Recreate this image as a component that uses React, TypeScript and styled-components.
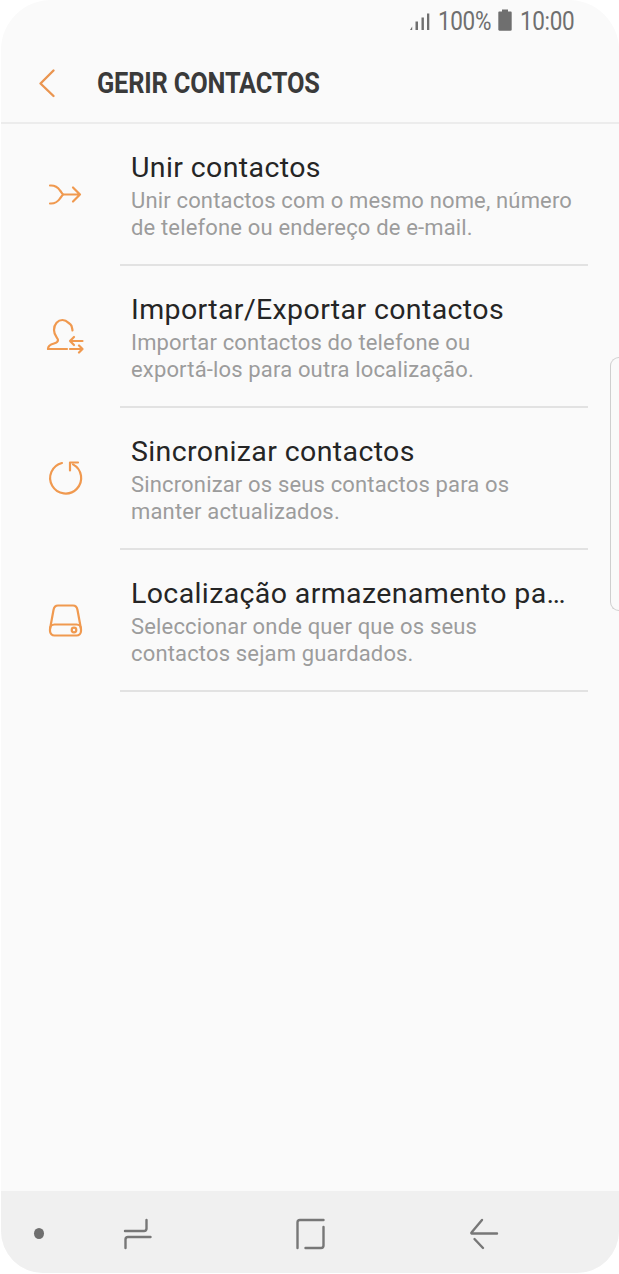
import { ReactElement, ReactNode } from "react";
import styled, { createGlobalStyle } from "styled-components";

const GlobalStyle = createGlobalStyle`
  html, body {
    background-color: #ffffff;
    margin: 0;
    padding: 0;
  }
`;

const Screen = styled.div`
  background-color: #fafafa;
  border-radius: 50px 50px 42px 42px;
  box-sizing: border-box;
  display: flex;
  flex-direction: column;
  font-family: Roboto, "Liberation Sans", sans-serif;
  height: 1273px;
  margin-left: 1px;
  overflow: hidden;
  position: relative;
  width: 618px;
`;

const StatusBar = styled.div`
  align-items: center;
  color: #6f6f6f;
  display: flex;
  flex-shrink: 0;
  font-size: 26px;
  gap: 7px;
  height: 43px;
  justify-content: flex-end;
  padding-right: 44px;

  svg {
    fill: #6f6f6f;
    flex-shrink: 0;
    margin-top: -3px;
  }
`;

const StatusText = styled.span<{ $width: number }>`
  display: inline-block;
  letter-spacing: -0.4px;
  line-height: 1;
  margin-top: -2px;
  transform: scaleX(0.865);
  transform-origin: left center;
  white-space: nowrap;
  width: ${props => props.$width}px;
`;

const Header = styled.div`
  align-items: center;
  border-bottom: 2px solid #ececec;
  display: flex;
  flex-shrink: 0;
  height: 79px;
  padding-left: 37px;
`;

const BackButton = styled.svg`
  flex-shrink: 0;
  height: 30px;
  margin-right: 40px;
  width: 19px;
`;

const Title = styled.h1`
  color: #3a3a3a;
  font-size: 29px;
  font-weight: 700;
  letter-spacing: -0.2px;
  line-height: 1;
  margin: 2px 0 0;
  transform: scaleX(0.875);
  transform-origin: left center;
  white-space: nowrap;
`;

const List = styled.div`
  display: flex;
  flex-direction: column;
  flex-grow: 1;
`;

const Row = styled.div`
  display: flex;
  height: 142px;
`;

const IconCell = styled.div`
  align-items: center;
  display: flex;
  flex-shrink: 0;
  justify-content: center;
  padding-top: 1px;
  width: 126px;

  svg {
    fill: none;
    height: 40px;
    stroke: #f0994f;
    stroke-linecap: round;
    stroke-linejoin: round;
    stroke-width: 2.2;
    width: 40px;
  }
`;

const RowBody = styled.div`
  border-bottom: 2px solid #e2e2e2;
  box-sizing: border-box;
  display: flex;
  flex-direction: column;
  margin-left: -7px;
  padding: 27px 16px 0 11px;
  width: 468px;
`;

const RowTitle = styled.div`
  color: #252525;
  font-size: 28.5px;
  letter-spacing: 0.38px;
  line-height: 34px;
  overflow: hidden;
  text-overflow: ellipsis;
  white-space: nowrap;
`;

const RowText = styled.div`
  color: #9c9c9c;
  font-size: 22px;
  letter-spacing: 0.16px;
  line-height: 26.5px;
  margin-top: 3px;
  white-space: nowrap;
`;

const SideHandle = styled.div`
  border: 1.5px solid #cfcfcf;
  border-radius: 10px 0 0 10px;
  border-right: none;
  box-sizing: border-box;
  height: 254px;
  position: absolute;
  right: 0;
  top: 357px;
  width: 9px;
`;

const NavBar = styled.div`
  align-items: center;
  background-color: #f0f0f0;
  display: flex;
  flex-shrink: 0;
  height: 82px;
  position: relative;
`;

const NavDot = styled.div`
  background-color: #6f6f6f;
  border-radius: 50%;
  height: 11px;
  margin-left: 33px;
  margin-top: 3px;
  width: 10px;
`;

const NavIcons = styled.div`
  display: flex;
  justify-content: space-between;
  margin-left: 78px;
  margin-top: 3px;
  width: 378px;

  svg {
    fill: none;
    height: 32px;
    stroke: #777777;
    stroke-linecap: round;
    stroke-linejoin: round;
    stroke-width: 2.4;
    width: 32px;
  }
`;

interface ContactAction {
  title: string;
  text: ReactNode;
  icon: ReactElement;
}

const actions: ContactAction[] = [
  {
    title: "Unir contactos",
    text: (
      <>
        Unir contactos com o mesmo nome, número
        <br />
        de telefone ou endereço de e-mail.
      </>
    ),
    icon: (
      <svg viewBox="0 0 40 40">
        <path d="M6 9.500h1c4 0 7 2 9 5 1.500 2 2 3 3 4-1 1-1.500 2-3 4-2 3-5 5-9 5H6" />
        <path d="M19 18.500h17M29 11.500l7 7-7 7" />
      </svg>
    ),
  },
  {
    title: "Importar/Exportar contactos",
    text: (
      <>
        Importar contactos do telefone ou
        <br />
        exportá-los para outra localização.
      </>
    ),
    icon: (
      <svg viewBox="0 0 40 40">
        <path d="M4 31c0-3 2-4.500 6-5.500 3-.8 4-2 4-3.500 0-2-4-4-4-10 0-6 4-10 8.500-10 4 0 5.500 2.500 8 4.500 1.500 1 1.500 3 2 6" />
        <path d="M4 31h19" />
        <path d="M26 23h12.500M26 23l4-4M26 23l4 4" />
        <path d="M26 31h12.500M38.500 31l-3.500-3.500M38.500 31l-3.500 3.500" />
      </svg>
    ),
  },
  {
    title: "Sincronizar contactos",
    text: (
      <>
        Sincronizar os seus contactos para os
        <br />
        manter actualizados.
      </>
    ),
    icon: (
      <svg viewBox="0 0 40 40">
        <path d="M18 3A15.500 15.500 0 1 0 29 4.400" />
        <path d="M26 10.500V2.500h8" />
      </svg>
    ),
  },
  {
    title: "Localização armazenamento padrão",
    text: (
      <>
        Seleccionar onde quer que os seus
        <br />
        contactos sejam guardados.
      </>
    ),
    icon: (
      <svg viewBox="0 0 40 40">
        <path d="M6 27L9.500 8c.5-3 2-4.500 4.500-4.500h15c2.500 0 4 1.500 4.500 4.500L37 27" />
        <rect x="6" y="22.500" width="31" height="11" rx="4.500" />
        <circle cx="30" cy="28" r="2.300" />
      </svg>
    ),
  },
];

function App(): ReactElement {
  return (
    <>
      <GlobalStyle />
      <Screen>
        <StatusBar>
          <svg width="24" height="24" viewBox="0 0 24 24">
            <path d="M3 22h2.200v-3.500zM8.500 22h2.500v-8.500H8.500zM14.500 22h2.400v-12.500h-2.400zM20 22h2.300V5.500H20z" />
          </svg>
          <StatusText $width={53}>100%</StatusText>
          <svg width="15" height="22" viewBox="0 0 15 22">
            <path d="M4 .5h6V2.500h2.500c.8 0 1.200.4 1.200 1.200V20.500c0 .8-.4 1.200-1.200 1.200h-11C.7 21.700.3 21.300.3 20.500V3.700c0-.8.4-1.200 1.200-1.200H4z" />
          </svg>
          <StatusText $width={55}>10:00</StatusText>
        </StatusBar>
        <Header>
          <BackButton viewBox="0 0 19 30" fill="none" stroke="#ea9550" strokeWidth="2.4" strokeLinecap="round" strokeLinejoin="round">
            <path d="M15.500 2.500L2.500 15.500l13 12.500" />
          </BackButton>
          <Title>GERIR CONTACTOS</Title>
        </Header>
        <List>
          {actions.map(action => (
            <Row key={action.title}>
              <IconCell>{action.icon}</IconCell>
              <RowBody>
                <RowTitle>{action.title}</RowTitle>
                <RowText>{action.text}</RowText>
              </RowBody>
            </Row>
          ))}
        </List>
        <NavBar>
          <NavDot />
          <NavIcons>
            <svg viewBox="0 0 32 32">
              <path d="M3 13h19c1.500 0 2.500-1 2.500-2.500V2" />
              <path d="M28.500 19H6c-1.500 0-2.500 1-2.500 2.500V30" />
            </svg>
            <svg viewBox="0 0 32 32">
              <path d="M28.500 2H5C3.500 2 2.500 3 2.500 4.500V30" />
              <path d="M28.500 9v18.500c0 1.500-1 2.500-2.500 2.500H10.500" />
            </svg>
            <svg viewBox="0 0 32 32">
              <path d="M14 2L3.500 14.500c-.3.300-.3.700 0 1H29" />
              <path d="M6.500 21l8.500 9" />
            </svg>
          </NavIcons>
        </NavBar>
        <SideHandle />
      </Screen>
    </>
  );
}

export default App;
